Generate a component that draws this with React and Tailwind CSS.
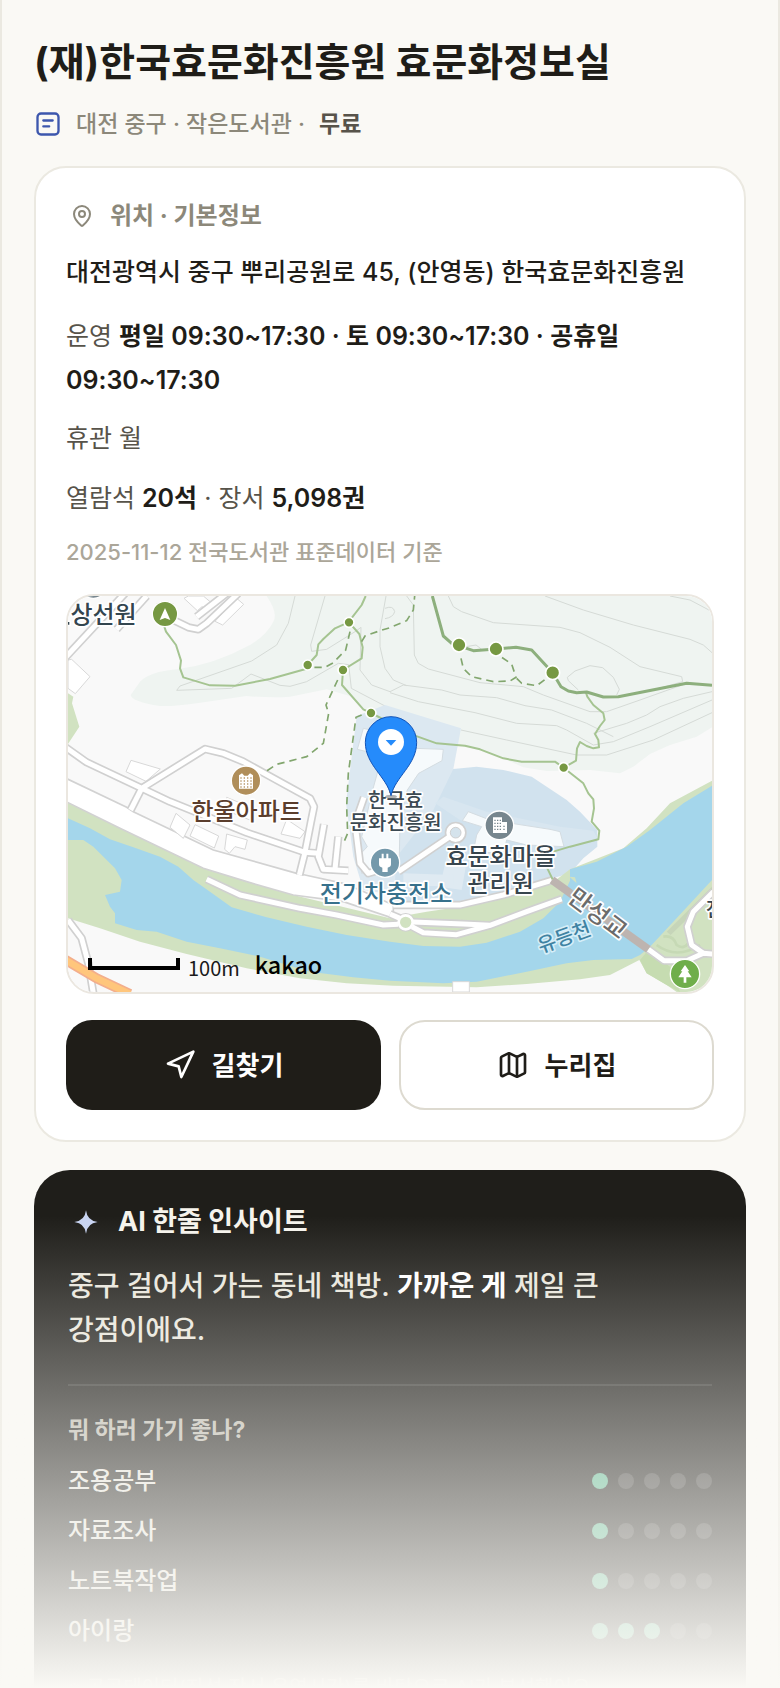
import React from 'react';
import { MapPin, Navigation, Map as MapIcon } from 'lucide-react';

const ratings = [
  { label: '조용공부', score: 1 },
  { label: '자료조사', score: 1 },
  { label: '노트북작업', score: 1 },
  { label: '아이랑', score: 3 },
];

const contours = [
  'M705 18 L685 100 L650 165 L575 213 L360 288 L350 301 L515 295 L573 252 L660 286 L690 289 L740 275 L835 220 L866 224 L874 295 L975 348',
  'M795 18 L752 165 L755 184 L800 178 L885 125 L903 112 L900 240 L935 285 L990 305 L1030 285 L1145 300 L1200 315 L1310 323 L1395 347 L1475 360 L1580 400 L1660 440',
  'M978 18 L960 120 L960 170 L975 235 L1000 270 L1040 287',
  'M1040 18 L1060 45 L1063 195 L1075 220 L1105 237 L1260 278 L1390 290 L1450 315 L1590 365 L1640 365 L1740 330 L1880 280',
  'M990 308 L1075 335 L1245 368 L1370 400 L1490 407 L1520 420 L1600 465 L1660 455 L1770 410 L1956 330',
  'M1165 18 L1180 50 L1205 65 L1300 98 L1500 112 L1560 128 L1650 172 L1740 230 L1865 260 L1868 275 L1780 300',
  'M1455 18 L1570 60 L1720 105 L1890 148 L1930 165 L1956 188',
  'M1830 18 L1890 30 L1956 65',
  'M1203 420 L1340 450 L1550 495 L1640 495 L1780 450 L1956 368',
  'M1600 430 L1700 400 L1760 375 L1800 350 L1870 325 L1956 305',
  'M1522 262 L1545 243 L1590 227 L1628 233 L1660 262 L1678 298 L1670 315',
  'M1522 262 L1525 272 L1555 300',
  'M1205 172 L1230 168 L1248 165 L1265 178',
  'M975 55 Q1000 45 1004 65 Q1000 82 975 86',
];

const roads = [
  'M14 205 L195 10',
  'M260 18 L170 118',
  'M340 90 L385 112 L415 118 L440 100 L535 10',
  'M410 80 L500 10',
  'M14 470 L80 517 L245 595 L435 477 L490 490 L550 515 L750 625 L762 650 L752 700 L735 787 L718 855',
  'M245 595 L212 660',
  'M245 595 L330 635 L560 728 L735 787 L775 790',
  'M792 703 L775 800 L790 838 L865 842',
  'M835 740 L825 838',
  'M912 622 L885 700 L900 820 L925 850 L975 835',
  'M1187 728 L1015 845',
  'M24 990 L65 1045 L85 1120 L100 1210',
  'M440 868 L540 915 L720 955 L830 975 L970 1005 L1015 1003',
  'M990 972 L1020 985',
  'M1058 996 L1210 1002 L1290 1006 L1400 965 L1505 927',
  'M1056 1010 L1090 1028 L1190 1034 L1290 1006',
  'M1000 945 L1200 945 L1330 915 L1475 871',
  'M1765 1078 L1812 1112 L1880 1112 L1930 1090 L1960 1092',
  'M1960 905 L1900 965 L1882 1010 L1895 1065 L1930 1090',
];

const buildings = [
  'M24 210 L35 208 L90 260 L46 311 L24 295Z',
  'M530 25 L551 43 L488 105 L465 94Z',
  'M385 18 L372 25 L412 62 L426 50 L440 58 L456 40 L430 18Z',
  'M213 511 L301 537 L258 574 L198 545Z',
  'M348 670 L390 705 L370 745 L330 712Z',
  'M405 704 L476 738 L463 774 L390 738Z',
  'M500 732 L562 750 L555 778 L525 770 L508 790 L494 778Z',
  'M680 688 L735 725 L720 745 L663 732Z',
  'M500 622 L580 655 L570 690 L495 660Z',
];

const trails = [
  'M313 110 L318 125 L348 165 L363 212 L360 235 L370 262 L450 286 L525 287 L630 267 L740 236',
  'M743 225 L770 195 L775 163 L790 147 L825 115 L865 97 L905 45 L917 18',
  'M867 97 L898 132 L908 172 L905 205 L849 240 L846 285 L910 358 L933 369 L1065 437 L1130 460 L1215 467 L1260 478 L1330 505 L1385 515 L1485 515 L1511 533 L1548 512 L1551 475 L1560 456 L1580 468 L1600 475 L1617 472 L1615 450 L1605 432 L1620 408 L1634 390 L1630 370 L1600 345 L1582 320 L1578 308',
  'M1511 533 L1570 580 L1585 610 L1600 628 L1602 655 L1595 695 L1618 722 L1615 748 L1530 770 L1480 785 L1462 835 L1478 868',
];

const dashed = [
  'M870 125 L857 180 L820 218 L795 232 L755 232',
  'M905 155 L915 138 L960 122 L990 113 L1040 92 L1060 60 L1064 18',
  'M833 270 L798 345 L806 370 L790 460 L740 500 L650 523 L612 548',
  'M905 375 L888 382 L865 550 L860 650 L863 730 L848 765',
  'M1203 205 L1210 235 L1235 260 L1300 275 L1350 273 L1368 262 L1355 222 L1315 195',
  'M1370 265 L1385 280 L1430 287 L1460 265',
];

const smallStops = [[867, 97], [743, 225], [849, 240], [933, 369], [1511, 533]];
const bigStops = [[1197, 165], [1308, 177], [1478, 248]];

function BuildingGlyph({ x, y, fill }) {
  const dots = [];
  for (let r = 0; r < 4; r++) {
    for (let c = 0; c < 4; c++) dots.push([x - 15 + c * 10, y - 8 + r * 9]);
  }
  return (
    <g>
      <path d={`M${x - 21} ${y + 24} V${y - 16} L${x - 12} ${y - 22} L${x - 5} ${y - 15} H${x + 5} L${x + 12} ${y - 22} L${x + 21} ${y - 16} V${y + 24}Z`} fill="#fff" />
      {dots.map(([dx, dy]) => (
        <rect key={`${dx}-${dy}`} x={dx - 2} y={dy - 2} width="4" height="4" fill={fill} />
      ))}
    </g>
  );
}

function LocationMap() {
  return (
    <svg viewBox="24 18 1932 1188" className="block w-full" role="img" aria-label="지도">
      <rect x="24" y="18" width="1932" height="1188" fill="#f9f9f9" />

      {/* Forest */}
      <path
        d="M620 18 Q655 70 640 95 Q620 135 570 165 Q460 225 350 238 Q270 245 240 275 L212 315 Q215 335 300 348 Q340 350 420 338 L560 318 Q640 325 690 320 L800 298 L870 318 L900 350 L1190 465 L1260 478 L1330 505 L1390 532 L1460 543 L1590 540 L1680 550 L1720 530 L1770 492 L1830 465 L1910 440 L1956 412 V18Z"
        fill="#eff4f1"
      />
      <path d="M24 310 L40 320 L36 340 L58 410 L24 462Z" fill="#d1e2c1" />
      <g fill="none" stroke="#d5dad6" strokeWidth="3">
        {contours.map((d) => <path key={d} d={d} />)}
      </g>

      {/* Campus */}
      <path d="M890 378 L975 345 L1203 415 L1180 537 L1240 700 L1100 930 L910 900 L880 800 L858 640Z" fill="#dce8f1" />
      <path d="M1180 537 L1250 530 L1330 540 L1415 560 L1520 630 L1560 665 L1612 720 L1612 770 L1570 805 L1530 850 L1220 940 L1000 945 L1010 800 L1120 660Z" fill="#d1e2ee" />
      <path d="M1125 640 L1150 620 L1280 665 L1500 710 L1600 722 L1612 745 L1530 770 L1380 740 L1200 690Z" fill="#d8e6f0" />
      <g fill="#f6fafc" stroke="#d4dce1" strokeWidth="3">
        <path d="M910 415 L975 430 L960 495 L892 478Z" />
        <path d="M1065 475 L1150 478 L1146 512 L1076 550 L1042 600 L1020 680 L1018 800 L905 850 L903 790 L922 770 L905 740 L938 600 L960 520Z" />
        <path d="M1225 665 L1290 690 L1470 718 L1500 725 L1512 770 L1400 765 L1340 750 L1330 790 L1240 785 L1250 735 L1265 710 L1207 692Z" />
      </g>
      <g fill="#dfeaf2">
        <path d="M1160 800 L1220 815 L1205 900 L1140 890Z" />
        <path d="M1030 850 L1180 855 V890 L1030 885Z" />
      </g>

      {/* River banks and river */}
      <path
        d="M24 638 L180 715 L430 835 L560 875 L700 915 L990 985 L1100 965 L1200 950 L1330 925 L1475 880 L1530 838 L1690 775 L1760 715 L1830 640 L1956 572 V1206 H1850 L1820 1185 L1760 1150 L1738 1110 L1650 1155 L1560 1168 L1400 1182 L1250 1192 L1000 1187 L860 1180 L720 1165 L560 1135 L380 1092 L240 1055 L120 1015 L24 985Z"
        fill="#d1e2c1"
      />
      <path
        d="M24 685 L90 715 L150 748 L220 772 L300 800 L355 830 L400 870 L450 905 L515 952 L620 982 L740 1010 L860 1035 L990 1055 L1090 1068 L1200 1070 L1280 1058 L1380 1025 L1450 985 L1500 935 L1530 872 V838 L1610 815 L1700 770 L1770 720 L1870 640 L1956 587 V870 L1840 995 L1770 1070 L1740 1095 L1715 1107 L1600 1110 L1520 1120 L1400 1145 L1250 1175 L1150 1180 L990 1172 L880 1162 L750 1145 L600 1100 L480 1075 L380 1055 L290 1025 L230 1020 L165 1000 V970 L150 950 L135 915 L180 905 L185 870 L165 835 L100 770 L70 750 L24 750Z"
        fill="#a4d6eb"
      />
      <path d="M1528 860 L1550 880 L1545 862Z" fill="#d1e2c1" />
      <path d="M1956 890 L1820 1025 L1832 1035 L1956 915Z" fill="#c6d5b9" />
      <path d="M1740 1110 L1765 1080 L1830 1130 L1860 1206 L1820 1185 L1760 1150Z" fill="#c6dcb1" />
      <g fill="none" stroke="#c6d9b5" strokeWidth="8">
        <path d="M1790 1065 Q1850 1110 1920 1065" />
        <path d="M1810 1040 Q1840 1035 1850 1065 Q1870 1080 1885 1060" />
      </g>

      {/* Main road */}
      <path
        d="M14 563 L200 652 L220 665 L460 780 L710 850 L735 855 L850 880 L900 900 L1000 945 V985 L850 935 L700 915 L560 875 L430 835 L180 715 L14 633Z"
        fill="#fff"
        stroke="#d2d2d2"
        strokeWidth="5"
      />
      <g fill="#fff" stroke="#d8d8d8" strokeWidth="3">
        {buildings.map((d) => <path key={d} d={d} />)}
      </g>
      <g fill="none" stroke="#d0d0d0" strokeWidth="25" strokeLinejoin="round">
        {roads.map((d) => <path key={d} d={d} />)}
      </g>
      <circle cx="1187" cy="728" r="33" fill="#d0d0d0" />
      <circle cx="1037" cy="997" r="28" fill="#d0d0d0" />
      <g fill="none" stroke="#fff" strokeWidth="15" strokeLinejoin="round">
        {roads.map((d) => <path key={d} d={d} />)}
      </g>
      <circle cx="1187" cy="728" r="22" fill="#dce8f1" stroke="#fff" strokeWidth="12" />
      <circle cx="1187" cy="728" r="16" fill="#d5e3ec" stroke="#d0d0d0" strokeWidth="3" />
      <circle cx="1037" cy="997" r="21" fill="#d1e2c1" stroke="#fff" strokeWidth="8" />
      <path d="M14 1108 L110 1165 L210 1212" fill="none" stroke="#f3ae8c" strokeWidth="30" />
      <path d="M14 1108 L110 1165 L210 1212" fill="none" stroke="#ffc67c" strokeWidth="20" />
      <path d="M1178 1175 H1228 V1206 H1178Z" fill="#fff" stroke="#d8d8d8" strokeWidth="3" />
      <path d="M1476 870 L1765 1078" stroke="#bdb4b0" strokeWidth="24" />

      {/* Trails */}
      <g fill="none" stroke="#a5c491" strokeWidth="6" strokeLinejoin="round">
        {trails.map((d) => <path key={d} d={d} />)}
      </g>
      <g fill="none" stroke="#82a66e" strokeWidth="5" strokeDasharray="22 15">
        {dashed.map((d) => <path key={d} d={d} />)}
      </g>
      <path
        d="M1117 18 L1150 138 L1175 160 L1240 182 L1308 177 L1368 172 L1415 180 L1478 248 L1503 290 L1525 303 L1550 308 L1580 306 L1630 321 L1675 320 L1880 280 L1956 286"
        fill="none"
        stroke="#8daf7d"
        strokeWidth="9"
        strokeLinejoin="round"
      />
      <g fill="#769842" stroke="#fff" strokeWidth="5">
        {smallStops.map(([x, y]) => <circle key={x} cx={x} cy={y} r="15" />)}
        {bigStops.map(([x, y]) => <circle key={x} cx={x} cy={y} r="21" />)}
      </g>

      {/* Place markers */}
      <circle cx="100" cy="-18" r="43" fill="#77868e" stroke="#fff" strokeWidth="4" />
      <g stroke="#fff" strokeWidth="4">
        <circle cx="315" cy="72" r="38" fill="#769842" />
        <circle cx="558" cy="572" r="44" fill="#b08e5a" />
        <circle cx="975" cy="818" r="44" fill="#7499ab" />
        <circle cx="1318" cy="706" r="43" fill="#77868e" />
        <circle cx="1875" cy="1152" r="44" fill="#6fae4b" />
      </g>
      <path d="M315 54 L331 90 L315 84 L299 90Z" fill="#fff" />
      <BuildingGlyph x={558} y={572} fill="#b08e5a" />
      <path d="M1299 682 H1326 V696 H1341 V729 H1299Z" fill="#fff" />
      <g fill="#77868e">
        {[689, 698, 707, 716].map((y) => (
          <path key={y} d={`M1303 ${y}h4v4h-4z M1311 ${y}h4v4h-4z M1319 ${y}h4v4h-4z`} />
        ))}
        <path d="M1330 707h4v4h-4z M1330 716h4v4h-4z" />
      </g>
      <path d="M965 791 h6 v14 h8 v-14 h6 v14 h8 v18 q0 8 -10 10 v13 h-16 v-13 q-10 -2 -10 -10 v-18 h8z" fill="#fff" />
      <path d="M1875 1125 L1888 1144 H1883 L1895 1162 H1879 V1178 H1871 V1162 H1855 L1867 1144 H1862Z" fill="#fff" />

      {/* Labels */}
      <g
        fontFamily="'Noto Sans CJK KR', sans-serif"
        fontWeight="500"
        textAnchor="middle"
        stroke="#fff"
        strokeWidth="10"
        strokeLinejoin="round"
        style={{ paintOrder: 'stroke' }}
      >
        <text x="230" y="98" textAnchor="end" fontSize="72" fill="#33454f">상선원</text>
        <path d="M20 96 h8 v8 h-8z" fill="#33454f" />
        <text x="560" y="690" fontSize="72" fill="#5b3e2d">한울아파트</text>
        <text x="1007" y="653" fontSize="60" fill="#3b4952">한국효</text>
        <text x="1007" y="719" fontSize="60" fill="#3b4952">문화진흥원</text>
        <text x="978" y="937" fontSize="72" fill="#37718c">전기차충전소</text>
        <text x="1322" y="826" fontSize="72" fill="#37454e">효문화마을</text>
        <text x="1322" y="905" fontSize="72" fill="#37454e">관리원</text>
        <text x="1610" y="995" transform="rotate(37 1610 975)" fontSize="72" fill="#6b6b6b">만성교</text>
        <text x="1513" y="1063" transform="rotate(-20 1513 1043)" fontSize="60" fill="#3f83a3" stroke="#d6eef8">유등천</text>
        <text x="1938" y="982" textAnchor="start" fontSize="60" fill="#37454e">잔</text>
      </g>

      {/* Pin */}
      <ellipse cx="993" cy="620" rx="18" ry="6" fill="#000" opacity="0.3" />
      <path
        d="M993 617 C980 560 916 525 916 457 A77 77 0 0 1 1070 457 C1070 525 1006 560 993 617Z"
        fill="#258bfb"
        stroke="#1254b8"
        strokeWidth="3"
      />
      <circle cx="993" cy="456" r="39" fill="#fff" />
      <path d="M977 450 H1009 L993 467Z" fill="#258bfb" />

      {/* Scale */}
      <path d="M90 1104 V1134 H354 V1104" fill="none" stroke="#000" strokeWidth="12" />
      <g fontFamily="'Noto Sans CJK KR', sans-serif">
        <text x="384" y="1157" fontSize="60" fill="#1a1a1a">100m</text>
        <text x="584" y="1151" fontWeight="500" fontSize="70" fill="#000">kakao</text>
      </g>
    </svg>
  );
}

function ScoreDots({ score }) {
  return (
    <span className="flex gap-[10px]" role="img" aria-label={`${score}/5`}>
      {[1, 2, 3, 4, 5].map((n) => (
        <span
          key={n}
          className={n <= score ? 'h-4 w-4 rounded-full bg-[#5db68f]' : 'h-4 w-4 rounded-full bg-white/15'}
        />
      ))}
    </span>
  );
}

function InfoCard() {
  return (
    <section className="rounded-[32px] border-2 border-[#ebe9e1] bg-white p-[30px]">
      <h2 className="flex items-center gap-4 pl-1 text-2xl leading-9 font-bold text-[#8c887a]">
        <MapPin className="h-6 w-6" strokeWidth={2} />
        위치 · 기본정보
      </h2>
      <p className="mt-4 text-[25px] leading-[44px] font-medium text-[#1f1d18]">
        대전광역시 중구 뿌리공원로 45, (안영동) 한국효문화진흥원
      </p>
      <p className="mt-5 text-[25px] leading-[44px] text-[#57534a]">
        운영{' '}
        <strong className="font-semibold text-[#1f1d18]">
          평일 09:30~17:30 · 토 09:30~17:30 · 공휴일 09:30~17:30
        </strong>
      </p>
      <p className="mt-[14px] text-[25px] leading-[44px] text-[#57534a]">휴관 월</p>
      <p className="mt-4 text-[25px] leading-[44px] text-[#57534a]">
        열람석 <strong className="font-semibold text-[#1f1d18]">20석</strong> · 장서{' '}
        <strong className="font-semibold text-[#1f1d18]">5,098권</strong>
      </p>
      <p className="mt-[14px] text-[22px] leading-9 font-medium text-[#aba699]">2025-11-12 전국도서관 표준데이터 기준</p>

      <div className="mt-6 overflow-hidden rounded-[28px] border-2 border-[#ebe7e0]">
        <LocationMap />
      </div>

      <div className="mt-[26px] grid grid-cols-2 gap-[18px]">
        <button className="flex h-[90px] items-center justify-center gap-4 rounded-[26px] bg-[#1f1d18] text-[26px] font-bold text-white">
          <Navigation className="h-8 w-8" strokeWidth={2} />
          길찾기
        </button>
        <a
          href="#homepage"
          className="flex h-[90px] items-center justify-center gap-4 rounded-[26px] border-2 border-[#dddad0] bg-white text-[26px] font-bold text-[#1f1d18]"
        >
          <MapIcon className="h-8 w-8" strokeWidth={2} />
          누리집
        </a>
      </div>
    </section>
  );
}

function InsightCard() {
  return (
    <section className="mt-7 rounded-[36px] bg-[#1f1e1a] p-[34px]">
      <h2 className="flex items-center gap-[18px] pl-1 text-[27px] leading-9 font-bold text-[#f5f3ec]">
        <svg viewBox="0 0 24 24" className="h-7 w-7" fill="#c8d4f2">
          <path d="M12 2 Q13 11 22 12 Q13 13 12 22 Q11 13 2 12 Q11 11 12 2Z" />
        </svg>
        AI 한줄 인사이트
      </h2>
      <p className="mt-6 text-[28px] leading-[44px] font-medium break-keep text-[#e9e6dc]">
        중구 걸어서 가는 동네 책방. <strong className="font-bold text-white">가까운 게</strong> 제일 큰 강점이에요.
      </p>
      <hr className="mt-8 border-t-2 border-white/10" />
      <h3 className="mt-[26px] text-[23px] leading-9 font-bold text-[#bbb8ad]">뭐 하러 가기 좋나?</h3>
      <ul className="mt-2">
        {ratings.map((r) => (
          <li key={r.label} className="flex h-[50px] items-center justify-between text-2xl font-medium text-[#e6e4dc]">
            {r.label}
            <ScoreDots score={r.score} />
          </li>
        ))}
      </ul>
      <p className="mt-4 text-[20px] leading-8 text-[#aba699]">
        ※ 공공데이터(좌석·장서·운영시간)를 바탕으로 AI가 분석했어요
      </p>
    </section>
  );
}

export default function App() {
  return (
    <div className="relative h-screen overflow-hidden bg-[#faf9f5] font-['Inter','Noto_Sans_CJK_KR',sans-serif]">
      <main className="min-h-full border-x-2 border-[#ebe9e1] px-8 pt-9">
        <h1 className="text-[39px] leading-[52px] font-bold text-[#1f1d18]">(재)한국효문화진흥원 효문화정보실</h1>
        <div className="mt-[18px] mb-6 flex items-center gap-[14px] text-[23px] leading-9 font-medium text-[#8c887a]">
          <svg viewBox="0 0 24 24" className="h-7 w-7" fill="none" stroke="#3d57ad" strokeWidth="2" strokeLinecap="round">
            <rect x="3" y="3" width="18" height="18" rx="3" />
            <path d="M8 9h8M8 14h5" />
          </svg>
          <p>
            대전 중구 · 작은도서관 · <strong className="ml-2 font-semibold text-[#57534a]">무료</strong>
          </p>
        </div>
        <InfoCard />
        <InsightCard />
      </main>
      <div className="pointer-events-none absolute inset-x-0 bottom-0 h-[472px] bg-linear-to-b from-[#faf9f5]/0 to-[#faf9f5]" />
    </div>
  );
}
